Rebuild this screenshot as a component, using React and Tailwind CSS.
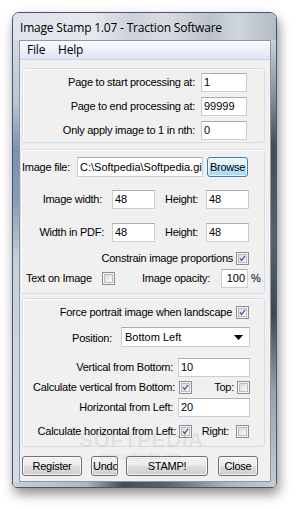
import React from "react";

const Input = ({ w, value, right, h = "h-[19px]" }) => (
  <div
    className={`${h} ${w} shrink-0 bg-white border border-[#c9cdd4] border-t-[#abadb3] flex items-center overflow-hidden whitespace-nowrap tracking-normal ${
      right ? "justify-end pr-[2px]" : "pl-[2px]"
    }`}
  >
    {value}
  </div>
);

const Check = ({ checked }) => (
  <div className="w-[13px] h-[13px] shrink-0 border border-[#8e8f8f] bg-[#f4f4f4] p-[1px]">
    <div className="w-full h-full border border-[#b9bdc3] bg-[linear-gradient(135deg,#d6d9de_0%,#eceef0_60%,#fafafa_100%)] flex items-center justify-center">
      {checked && (
        <svg width="9" height="9" viewBox="0 0 9 9">
          <path d="M1.2 4.4 L3.4 7 L7.8 1" fill="none" stroke="#4a5d92" strokeWidth="1.7" />
        </svg>
      )}
    </div>
  </div>
);

const Btn = ({ w, children, blue, extra = "" }) => (
  <div
    className={`h-[20px] ${w} shrink-0 rounded-[3px] border ${
      blue
        ? "border-[#3c7fb1] bg-[linear-gradient(#eaf6fd_0%,#d9f0fc_50%,#bee6fd_50%,#a7d9f5_100%)]"
        : "border-[#707070] bg-[linear-gradient(#f2f2f2_0%,#ebebeb_50%,#dddddd_50%,#cfcfcf_100%)]"
    } shadow-[inset_0_0_0_1px_rgba(255,255,255,0.75)] flex items-center overflow-hidden whitespace-nowrap ${extra}`}
  >
    {children}
  </div>
);

export default function App() {
  return (
    <div className="w-[297px] h-[509px] bg-white pt-[12px] pl-[12px] font-['Liberation_Sans',Arial,sans-serif] text-[11px] tracking-[-0.25px] text-black leading-none">
      <div className="w-[265px] h-[476px] rounded-t-[7px] rounded-b-[5px] border border-[#4a5561] shadow-[2px_6px_12px_rgba(0,0,0,0.45)] overflow-hidden flex flex-col">
        {/* title bar */}
        <div className="h-[27px] shrink-0 bg-[linear-gradient(90deg,#dde3ea_0%,#e4e9ee_30%,#ccd2d9_45%,#d8dde3_58%,#bcc3cb_75%,#cfd5dc_86%,#b2bac3_100%)] flex items-center pl-[7px] pt-[2px] font-['Open_Sans',sans-serif] text-[12px] tracking-[-0.2px]">
          Image Stamp 1.07 - Traction Software
        </div>
        <div className="flex h-[442px] shrink-0">
          <div className="w-[7px] bg-[linear-gradient(180deg,#d3dae2_0%,#b9c5d3_14%,#7892b5_25%,#869dbb_36%,#c7cfd8_50%,#d6dce3_100%)] border-r border-[#8c96a2]" />
          <div className="w-[250px] bg-[#f0f0f0] border-t border-b border-[#8c96a2] flex flex-col relative">
            {/* menu */}
            <div className="h-[19px] shrink-0 bg-[linear-gradient(#f9fbfe,#dde6f3)] border-b border-[#cfd6e0] flex items-center pl-[7px] font-['Open_Sans',sans-serif] text-[12px] tracking-[-0.2px]">
              <span className="w-[31px]">File</span>
              <span>Help</span>
            </div>

            {/* group 1 */}
            <div className="mt-[8px] ml-[2px] w-[243px] h-[75px] shrink-0 border border-[#d5dfe5] rounded-[3px] shadow-[inset_1px_1px_0_#fff] flex flex-col pt-[4px] gap-[5px] pr-[17px]">
              {[
                ["Page to start processing at:", "1"],
                ["Page to end processing at:", "99999"],
                ["Only apply image to 1 in nth:", "0"],
              ].map(([l, v]) => (
                <div key={l} className="h-[19px] flex items-center justify-end gap-[6px]">
                  <span>{l}</span>
                  <Input w="w-[46px]" value={v} />
                </div>
              ))}
            </div>

            {/* group 2 */}
            <div className="mt-[6px] w-[245px] h-[145px] shrink-0 border border-[#d5dfe5] rounded-[3px] shadow-[inset_1px_1px_0_#fff] flex flex-col pt-[7px]">
              <div className="h-[20px] flex items-center pl-[1px]">
                <span className="w-[55px]">Image file:</span>
                <Input w="w-[126px]" h="h-[20px]" value="C:\Softpedia\Softpedia.gif" />
                <Btn w="w-[41px]" blue extra="ml-[4px] justify-center">Browse</Btn>
              </div>
              <div className="h-[19px] mt-[13px] flex items-center">
                <span className="w-[81px] text-right">Image width:</span>
                <Input w="w-[43px] ml-[10px]" value="48" />
                <span className="w-[33px] ml-[10px]">Height:</span>
                <Input w="w-[43px] ml-[8px]" value="48" />
              </div>
              <div className="h-[19px] mt-[14px] flex items-center">
                <span className="w-[83px] text-right">Width in PDF:</span>
                <Input w="w-[43px] ml-[8px]" value="48" />
                <span className="w-[33px] ml-[10px]">Height:</span>
                <Input w="w-[43px] ml-[8px]" value="48" />
              </div>
              <div className="h-[13px] mt-[10px] flex items-center justify-end pr-[15px] gap-[3px]">
                <span>Constrain image proportions</span>
                <Check checked />
              </div>
              <div className="h-[19px] mt-[4px] flex items-center pl-[5px]">
                <span className="w-[76px]">Text on Image</span>
                <Check />
                <span className="w-[69px] ml-[27px]">Image opacity:</span>
                <Input w="w-[27px] ml-[10px]" value="100" right />
                <span className="ml-[3px]">%</span>
              </div>
            </div>

            {/* group 3 */}
            <div className="mt-[4px] ml-[2px] w-[243px] h-[149px] shrink-0 border border-[#d5dfe5] rounded-[3px] shadow-[inset_1px_1px_0_#fff] flex flex-col pt-[7px]">
              <div className="h-[13px] flex items-center justify-end pr-[15px] gap-[4px]">
                <span>Force portrait image when landscape</span>
                <Check checked />
              </div>
              <div className="h-[20px] mt-[8px] flex items-center justify-end pr-[14px]">
                <span className="mr-[9px] mt-[3px]">Position:</span>
                <div className="w-[129px] h-[20px] bg-white border border-[#c9cdd4] border-t-[#abadb3] flex items-center pl-[3px] pr-[6px] justify-between tracking-normal">
                  <span>Bottom Left</span>
                  <svg width="9" height="5" viewBox="0 0 9 5">
                    <path d="M0 0 H9 L4.5 5 Z" fill="#000" />
                  </svg>
                </div>
              </div>
              <div className="h-[19px] mt-[11px] flex items-center justify-end pr-[14px] gap-[5px]">
                <span>Vertical from Bottom:</span>
                <Input w="w-[72px]" value="10" />
              </div>
              <div className="h-[13px] mt-[4px] flex items-center">
                <div className="w-[169px] flex items-center justify-end gap-[4px]">
                  <span>Calculate vertical from Bottom:</span>
                  <Check checked />
                </div>
                <div className="w-[58px] flex items-center justify-end gap-[3px]">
                  <span>Top:</span>
                  <Check />
                </div>
              </div>
              <div className="h-[19px] mt-[4px] flex items-center justify-end pr-[14px] gap-[5px]">
                <span>Horizontal from Left:</span>
                <Input w="w-[72px]" value="20" />
              </div>
              <div className="h-[13px] mt-[8px] flex items-center">
                <div className="w-[169px] flex items-center justify-end gap-[3px]">
                  <span>Calculate horizontal from Left:</span>
                  <Check checked />
                </div>
                <div className="w-[57px] flex items-center justify-end gap-[7px]">
                  <span>Right:</span>
                  <Check />
                </div>
              </div>
            </div>

            {/* buttons */}
            <div className="mt-[9px] h-[20px] flex items-center pl-[2px]">
              <Btn w="w-[60px]" extra="justify-center">Register</Btn>
              <Btn w="w-[27px]" extra="ml-[9px] justify-start pl-[1px]">Undo</Btn>
              <Btn w="w-[82px]" extra="ml-[8px] justify-center">STAMP!</Btn>
              <Btn w="w-[40px]" extra="ml-[10px] justify-center">Close</Btn>
            </div>

            {/* watermark */}
            <div className="absolute left-[59px] top-[388px] pointer-events-none font-bold text-[21px] tracking-[0.5px] text-[#000]/[0.07]">
              SOFTPEDIA
            </div>
            <div className="absolute left-[79px] top-[410px] pointer-events-none text-[9.5px] tracking-[0px] text-[#000]/[0.12]">
              www.softpedia.com
            </div>
          </div>
          <div className="w-[6px] bg-[linear-gradient(180deg,#c8cfd7_0%,#8a939d_12%,#444c55_24%,#59626c_45%,#3f474f_62%,#9aa3ad_80%,#c4cbd3_100%)] border-l border-[#8c96a2]" />
        </div>
        <div className="flex-1 bg-[linear-gradient(90deg,#c8d0d8_0%,#aeb7c1_28%,#434c56_42%,#5c6570_60%,#a8b1bb_80%,#c6cdd5_100%)]" />
      </div>
    </div>
  );
}
